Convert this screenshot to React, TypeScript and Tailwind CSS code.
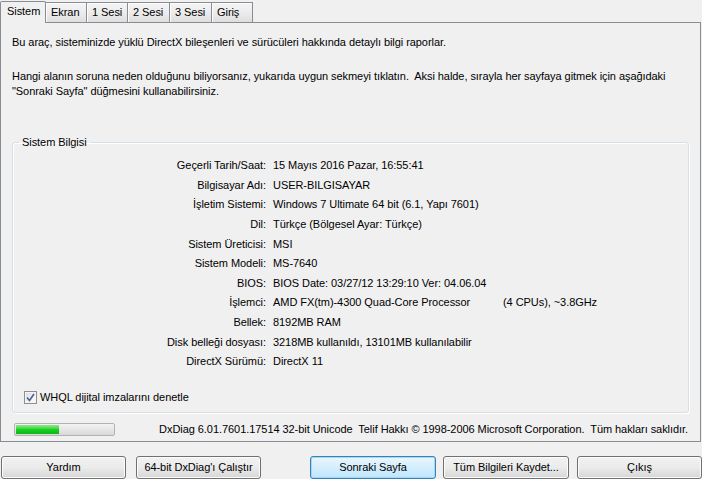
import React from "react";

const tabs = [
  { label: "Sistem", w: "w-[46px]" },
  { label: "Ekran", w: "w-[41px]" },
  { label: "1 Sesi", w: "w-[41px]" },
  { label: "2 Sesi", w: "w-[42px]" },
  { label: "3 Sesi", w: "w-[42px]" },
  { label: "Giriş", w: "w-[41px]" },
];

const rows: [string, React.ReactNode][] = [
  ["Geçerli Tarih/Saat:", "15 Mayıs 2016 Pazar, 16:55:41"],
  ["Bilgisayar Adı:", "USER-BILGISAYAR"],
  ["İşletim Sistemi:", "Windows 7 Ultimate 64 bit (6.1, Yapı 7601)"],
  ["Dil:", "Türkçe (Bölgesel Ayar: Türkçe)"],
  ["Sistem Üreticisi:", "MSI"],
  ["Sistem Modeli:", "MS-7640"],
  ["BIOS:", "BIOS Date: 03/27/12 13:29:10 Ver: 04.06.04"],
  [
    "İşlemci:",
    <>
      <span className="inline-block w-[230px]">AMD FX(tm)-4300 Quad-Core Processor</span>
      <span>(4 CPUs), ~3.8GHz</span>
    </>,
  ],
  ["Bellek:", "8192MB RAM"],
  ["Disk belleği dosyası:", "3218MB kullanıldı, 13101MB kullanılabilir"],
  ["DirectX Sürümü:", "DirectX 11"],
];

const Button = ({ label, w, focused }: { label: string; w: string; focused?: boolean }) => (
  <div
    className={`${w} h-[23px] flex items-center justify-center rounded-[3px] border ${
      focused
        ? "border-[#3c7fb1] bg-gradient-to-b from-[#eaf6fd] to-[#bee6fd] shadow-[inset_0_0_0_1px_#9fd9fb]"
        : "border-[#707070] bg-gradient-to-b from-[#f2f2f2] via-[#ebebeb] to-[#d6d6d6] shadow-[inset_0_0_0_1px_#fcfcfc]"
    }`}
  >
    {label}
  </div>
);

export default function App() {
  return (
    <div
      className="w-[702px] h-[479px] bg-[#f0f0f0] text-[11px] leading-[15px] tracking-[-0.06px] text-black overflow-hidden"
      style={{ fontFamily: '"Liberation Sans", Arial, sans-serif' }}
    >
      {/* tab strip */}
      <div className="flex h-[22px] items-end">
        {tabs.map((t, i) =>
          i === 0 ? (
            <div
              key={t.label}
              className={`${t.w} h-[22px] -mb-px z-10 flex items-center pl-[6px] pb-[2px] border border-b-0 border-[#898c95] bg-[#f0f0f0] rounded-t-[2px]`}
            >
              {t.label}
            </div>
          ) : (
            <div
              key={t.label}
              className={`${t.w} h-[20px] flex items-center pl-[5px] border border-b-0 border-l-0 border-[#898c95] bg-gradient-to-b from-[#f4f4f4] via-[#ececec] to-[#dedede] shadow-[inset_1px_1px_0_#fcfcfc]`}
            >
              {t.label}
            </div>
          )
        )}
      </div>

      {/* tab pane */}
      <div className="w-[701px] h-[420px] border border-[#898c95] bg-[#f0f0f0] flex flex-col pl-[11px] pr-[11px]">
        <p className="mt-[12px]">
          Bu araç, sisteminizde yüklü DirectX bileşenleri ve sürücüleri hakkında detaylı bilgi raporlar.
        </p>
        <p className="mt-[19px]">
          Hangi alanın soruna neden olduğunu biliyorsanız, yukarıda uygun sekmeyi tıklatın.&nbsp; Aksi halde, sırayla her
          sayfaya gitmek için aşağıdaki
          <br />
          "Sonraki Sayfa" düğmesini kullanabilirsiniz.
        </p>

        <fieldset className="mt-[36px] w-[677px] h-[278px] border border-[#d5dfe5] rounded-[3px] shadow-[inset_1px_1px_0_#ffffff,1px_1px_0_#ffffff] px-0 pt-[6px] flex flex-col">
          <legend className="ml-[6px] px-[3px]">Sistem Bilgisi</legend>
          <div className="grid grid-cols-[253px_1fr] gap-x-[7px]">
            {rows.map(([k, v]) => (
              <React.Fragment key={k}>
                <div className="h-[19.6px] flex items-center justify-end">{k}</div>
                <div className="h-[19.6px] flex items-center whitespace-nowrap">{v}</div>
              </React.Fragment>
            ))}
          </div>
          <label className="mt-[18px] ml-[11px] flex items-center gap-[3px]">
            <span className="w-[13px] h-[13px] border border-[#8e8f8f] bg-gradient-to-br from-[#dcdcdc] to-[#ffffff] flex items-center justify-center shadow-[inset_0_0_0_1px_#f4f4f4]">
              <svg width="9" height="9" viewBox="0 0 9 9">
                <path d="M1 4.5 L3.5 7.5 L8 1" stroke="#4a5f97" strokeWidth="1.6" fill="none" />
              </svg>
            </span>
            WHQL dijital imzalarını denetle
          </label>
        </fieldset>

        <div className="mt-[9px] flex items-center justify-between">
          <div className="ml-[2px] w-[101px] h-[13px] rounded-[2px] border border-[#b2b2b2] bg-gradient-to-b from-[#f3f3f3] to-[#d9d9d9] p-px">
            <div className="w-[43px] h-full bg-gradient-to-b from-[#8ee68e] via-[#17d31f] to-[#0cb614]" />
          </div>
          <div className="mr-[1px]">
            DxDiag 6.01.7601.17514 32-bit Unicode&nbsp; Telif Hakkı © 1998-2006 Microsoft Corporation.&nbsp; Tüm hakları
            saklıdır.
          </div>
        </div>
      </div>

      {/* buttons */}
      <div className="mt-[14px] flex pl-[1px]">
        <Button label="Yardım" w="w-[125px]" />
        <div className="ml-[10px]">
          <Button label="64-bit DxDiag'ı Çalıştır" w="w-[125px]" />
        </div>
        <div className="ml-[49px]">
          <Button label="Sonraki Sayfa" w="w-[126px]" focused />
        </div>
        <div className="ml-[7px]">
          <Button label="Tüm Bilgileri Kaydet..." w="w-[126px]" />
        </div>
        <div className="ml-[8px]">
          <Button label="Çıkış" w="w-[125px]" />
        </div>
      </div>
    </div>
  );
}
